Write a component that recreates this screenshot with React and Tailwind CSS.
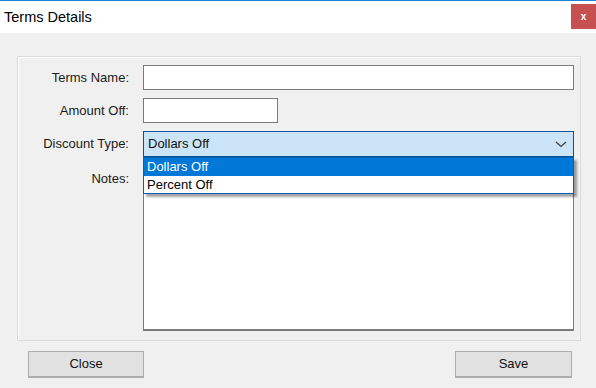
import React from 'react';

export default function App() {
    const font = {fontFamily: '"Liberation Sans", Arial, sans-serif'};

    return (
        <div className="w-[596px] h-[388px] bg-[#f0f0f0] flex flex-col overflow-hidden text-[#000]" style={font}>
            {/* title bar */}
            <div className="h-[33px] bg-white border-t border-[#1883d7] flex items-start justify-between">
                <div className="pl-[4px] pt-[8px] text-[14.5px] leading-[16px] text-black">Terms Details</div>
                <div className="mt-[3px] w-[25px] h-[25px] bg-[#c75050] flex items-center justify-center">
                    <span className="text-white text-[10px] font-bold leading-none">x</span>
                </div>
            </div>

            {/* form panel */}
            <div className="pl-[17px] pr-[15px] pt-[23px]">
                <div className="h-[285px] border border-[#dcdcdc] shadow-[inset_1px_1px_0_#ffffff] flex flex-col gap-[8px] pt-[8px] pr-[6px] pb-[9px] text-[13px]">
                    <div className="flex items-center h-[25px]">
                        <label className="w-[111px] text-right text-[#1a1a1a]">Terms Name:</label>
                        <div className="ml-[14px] flex-1 h-[25px] bg-white border border-[#7a7a7a]"></div>
                    </div>
                    <div className="flex items-center h-[25px]">
                        <label className="w-[111px] text-right text-[#1a1a1a]">Amount Off:</label>
                        <div className="ml-[14px] w-[135px] h-[25px] bg-white border border-[#7a7a7a]"></div>
                    </div>
                    <div className="flex items-center h-[26px]">
                        <label className="w-[111px] text-right text-[#1a1a1a]">Discount Type:</label>
                        <div className="relative ml-[14px] flex-1 h-[26px] bg-[#cce4f7] border border-[#005499] flex items-center justify-between pl-[4px] pr-[6px] z-10">
                            <span className="text-[#111]">Dollars Off</span>
                            <svg width="12" height="7" viewBox="0 0 12 7" fill="none">
                                <path d="M1 1 L6 5.5 L11 1" stroke="#444" strokeWidth="1.3" />
                            </svg>
                            {/* open dropdown */}
                            <div className="absolute left-[-1px] right-[-1px] top-[25px] h-[37px] bg-white border border-[#0b5cad] shadow-[3px_3px_2px_rgba(0,0,0,0.35)] flex flex-col">
                                <div className="h-[18px] bg-[#0078d7] text-white pl-[3px] leading-[18px]">Dollars Off</div>
                                <div className="h-[17px] text-black pl-[3px] leading-[17px]">Percent Off</div>
                            </div>
                        </div>
                    </div>
                    <div className="flex items-start flex-1">
                        <label className="w-[111px] text-right text-[#1a1a1a] mt-[4px]">Notes:</label>
                        <div className="ml-[14px] flex-1 h-full bg-white border border-[#7a7a7a] border-b-2"></div>
                    </div>
                </div>
            </div>

            {/* buttons */}
            <div className="flex justify-between pl-[28px] pr-[24px] pt-[10px] text-[13px]">
                <button className="w-[116px] h-[27px] bg-[#e1e1e1] border border-[#adadad] border-b-2 text-[#111]">Close</button>
                <button className="w-[117px] h-[27px] bg-[#e1e1e1] border border-[#adadad] border-b-2 text-[#111]">Save</button>
            </div>
        </div>
    );
}
